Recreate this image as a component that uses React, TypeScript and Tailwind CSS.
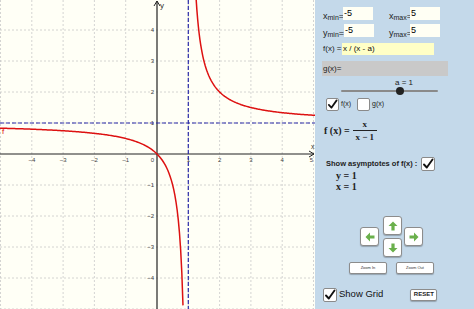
import React from 'react'

const OX = 157
const OY = 154
const UX = 31.3
const UY = 31
const W = 315
const H = 309

const px = (x: number) => OX + x * UX
const py = (y: number) => OY - y * UY

function branch(from: number, to: number) {
  const pts: string[] = []
  const n = 160
  for (let i = 0; i <= n; i++) {
    const x = from + ((to - from) * i) / n
    const y = x / (x - 1)
    pts.push(`${px(x).toFixed(2)},${py(y).toFixed(2)}`)
  }
  return 'M' + pts.join(' L')
}

function Graph() {
  const ticks = [-5, -4, -3, -2, -1, 1, 2, 3, 4, 5]
  return (
    <svg width={W} height={H} className="block">
      <rect width={W} height={H} fill="#fffff6" />
      {/* grid */}
      {ticks.map((k) => (
        <line key={'v' + k} x1={px(k)} y1={0} x2={px(k)} y2={H} stroke="#c9c9c9" strokeWidth={0.8} strokeDasharray="2 2" />
      ))}
      {ticks.map((k) => (
        <line key={'h' + k} x1={0} y1={py(k)} x2={W} y2={py(k)} stroke="#c9c9c9" strokeWidth={0.8} strokeDasharray="2 2" />
      ))}
      {/* axes */}
      <line x1={0} y1={OY} x2={W - 1} y2={OY} stroke="#222" strokeWidth={1.2} />
      <line x1={OX} y1={1} x2={OX} y2={H} stroke="#222" strokeWidth={1.2} />
      <path d={`M${W - 6},${OY - 3} L${W - 1},${OY} L${W - 6},${OY + 3}`} fill="none" stroke="#222" strokeWidth={1} />
      <path d={`M${OX - 3},6 L${OX},1 L${OX + 3},6`} fill="none" stroke="#222" strokeWidth={1} />
      <text x={311} y={149} fontSize={7} fill="#333" fontFamily="Liberation Sans, sans-serif">x</text>
      <text x={160} y={8} fontSize={8} fill="#333" fontFamily="Liberation Sans, sans-serif">y</text>
      {/* tick labels */}
      {[-4, -3, -2, -1, 1, 2, 3, 4].map((k) => (
        <text key={'tx' + k} x={px(k)} y={OY + 8} fontSize={6} fill="#444" textAnchor="middle" fontFamily="Liberation Sans, sans-serif">
          {k < 0 ? '\u2212' + -k : k}
        </text>
      ))}
      <text x={W - 2} y={OY + 8} fontSize={6} fill="#444" textAnchor="end" fontFamily="Liberation Sans, sans-serif">5</text>
      {[-4, -3, -2, -1, 1, 2, 3, 4].map((k) => (
        <text key={'ty' + k} x={OX - 3} y={py(k) + 2} fontSize={6} fill="#444" textAnchor="end" fontFamily="Liberation Sans, sans-serif">
          {k < 0 ? '\u2212' + -k : k}
        </text>
      ))}
      <text x={OX - 3} y={OY + 8} fontSize={6} fill="#444" textAnchor="end" fontFamily="Liberation Sans, sans-serif">0</text>
      {/* asymptotes */}
      <line x1={px(1)} y1={0} x2={px(1)} y2={H} stroke="#2b2ba8" strokeWidth={1.2} strokeDasharray="4 2" />
      <line x1={0} y1={py(1)} x2={W} y2={py(1)} stroke="#2b2ba8" strokeWidth={1.2} strokeDasharray="4 2" />
      {/* curve */}
      <path d={branch(-5.1, 0.83)} fill="none" stroke="#dd1111" strokeWidth={1.5} />
      <path d={branch(1.25, 5.1)} fill="none" stroke="#dd1111" strokeWidth={1.5} />
      <text x={2} y={134} fontSize={8} fill="#dd1111" fontFamily="Liberation Sans, sans-serif">f</text>
    </svg>
  )
}

function Check({ checked, size = 'w-[13px] h-[13px]' }: { checked?: boolean; size?: string }) {
  return (
    <div className={`${size} flex shrink-0 items-center justify-center rounded-[2px] border border-[#8a8a8a] bg-white`}>
      {checked && (
        <svg viewBox="0 0 12 12" className="h-full w-full">
          <path d="M2 6.5 L4.8 9.5 L10.5 1.5" fill="none" stroke="#111" strokeWidth={1.9} strokeLinecap="round" strokeLinejoin="round" />
        </svg>
      )}
    </div>
  )
}

function Arrow({ rot }: { rot: number }) {
  return (
    <svg viewBox="0 0 10 10" className="h-[10px] w-[10px]" style={{ transform: `rotate(${rot}deg)` }}>
      <polygon points="5,0.5 9.5,5 6.6,5 6.6,9.5 3.4,9.5 3.4,5 0.5,5" fill="#6ab04c" />
    </svg>
  )
}

function ArrowBtn({ rot }: { rot: number }) {
  return (
    <div className="flex h-[19px] w-[19px] items-center justify-center rounded-[3px] border border-[#8c8c8c] bg-white shadow-[0_1px_1px_rgba(0,0,0,0.25)]">
      <Arrow rot={rot} />
    </div>
  )
}

function Sub({ base, sub }: { base: string; sub: string }) {
  return (
    <span className="whitespace-nowrap text-[9px] leading-none text-[#222]">
      {base}
      <sub className="text-[7px]">{sub}</sub>=
    </span>
  )
}

export default function App() {
  return (
    <div className="flex h-[309px] w-[474px] overflow-hidden bg-[#c4d9ea] font-['Liberation_Sans',Arial,sans-serif]">
      <div className="w-[315px] shrink-0 border-r border-[#9aa]">
        <Graph />
      </div>
      <div className="flex flex-1 flex-col pl-[8px] pt-[7px]">
        {/* min / max */}
        <div className="flex h-[13px] items-center">
          <div className="flex w-[66px] items-center">
            <div className="w-[20px]"><Sub base="x" sub="min" /></div>
            <div className="flex h-[13px] w-[30px] items-center bg-[#fffff4] pl-[1px] text-[9px]">-5</div>
          </div>
          <div className="w-[21px]"><Sub base="x" sub="max" /></div>
          <div className="flex h-[13px] w-[30px] items-center bg-[#fffff4] pl-[1px] text-[9px]">5</div>
        </div>
        <div className="mt-[4px] flex h-[13px] items-center">
          <div className="flex w-[66px] items-center">
            <div className="w-[21px]"><Sub base="y" sub="min" /></div>
            <div className="flex h-[13px] w-[30px] items-center bg-[#fffff4] pl-[1px] text-[9px]">-5</div>
          </div>
          <div className="w-[21px]"><Sub base="y" sub="max" /></div>
          <div className="flex h-[13px] w-[30px] items-center bg-[#fffff4] pl-[1px] text-[9px]">5</div>
        </div>
        {/* f(x) input */}
        <div className="mt-[6px] flex h-[12px] items-center">
          <span className="w-[19px] whitespace-nowrap text-[8px] text-[#222]">f(x) =</span>
          <div className="flex h-[12px] w-[92px] items-center bg-[#ffffc6] pl-[1px] text-[8px] text-[#111]">x / (x - a)</div>
        </div>
        {/* g(x) */}
        <div className="ml-[-1px] mt-[6px] flex h-[15px] w-[126px] items-center bg-[#c9c9c9] pl-[1px] text-[8px] text-[#222]">g(x)=</div>
        {/* slider */}
        <div className="ml-[72px] mt-[3px] h-[8px] text-[8px] leading-[8px] text-[#222]">a = 1</div>
        <div className="relative ml-[18px] flex h-[8px] w-[97px] items-center">
          <div className="h-[2px] w-full rounded-full bg-[#8a8a8a]" />
          <div className="absolute left-[55px] top-0 h-[8px] w-[8px] rounded-full bg-[#222]" />
        </div>
        {/* checkboxes */}
        <div className="mt-[3px] flex h-[13px] items-center">
          <div className="ml-[3px]"><Check checked /></div>
          <span className="ml-[2px] text-[7px] text-[#222]">f(x)</span>
          <div className="ml-[6px]"><Check /></div>
          <span className="ml-[2px] text-[7px] text-[#222]">g(x)</span>
        </div>
        {/* formula */}
        <div className="ml-[1px] mt-[6px] flex h-[26px] items-center font-['Liberation_Serif',serif] font-bold text-[#222]">
          <span className="text-[10px]">f (x) =</span>
          <div className="ml-[3px] flex flex-col items-center text-[9px] leading-[10px]">
            <span>x</span>
            <div className="my-[1px] h-[1px] w-[24px] bg-[#222]" />
            <span>x − 1</span>
          </div>
        </div>
        {/* asymptotes */}
        <div className="ml-[3px] mt-[14px] flex h-[14px] items-center">
          <span className="text-[7.5px] font-bold text-[#222]">Show asymptotes of f(x) :</span>
          <div className="ml-[4px]"><Check checked size="w-[14px] h-[14px]" /></div>
        </div>
        <div className="ml-[13px] flex flex-col font-['Liberation_Serif',serif] text-[10px] font-bold leading-[10.5px] text-[#222]">
          <span>y = 1</span>
          <span>x = 1</span>
        </div>
        {/* arrows */}
        <div className="ml-[37px] mt-[24px] flex items-center">
          <ArrowBtn rot={-90} />
          <div className="ml-[4px] flex flex-col gap-[3px]">
            <ArrowBtn rot={0} />
            <ArrowBtn rot={180} />
          </div>
          <div className="ml-[2px]"><ArrowBtn rot={90} /></div>
        </div>
        {/* zoom */}
        <div className="ml-[26px] mt-[5px] flex gap-[9px]">
          <div className="flex h-[12px] w-[38px] items-center justify-center rounded-[2px] border border-[#8c8c8c] bg-white text-[4px] text-[#333] shadow-[0_1px_1px_rgba(0,0,0,0.25)]">Zoom In</div>
          <div className="flex h-[12px] w-[38px] items-center justify-center rounded-[2px] border border-[#8c8c8c] bg-white text-[4px] text-[#333] shadow-[0_1px_1px_rgba(0,0,0,0.25)]">Zoom Out</div>
        </div>
        {/* bottom */}
        <div className="mt-[12px] flex h-[17px] items-center">
          <Check checked size="w-[14px] h-[14px]" />
          <span className="ml-[2px] text-[9.5px] text-[#111]">Show Grid</span>
          <div className="ml-[27px] flex h-[12px] w-[27px] items-center justify-center rounded-[2px] border border-[#8c8c8c] bg-white text-[6px] font-bold text-[#222] shadow-[0_1px_1px_rgba(0,0,0,0.25)]">RESET</div>
        </div>
      </div>
    </div>
  )
}
